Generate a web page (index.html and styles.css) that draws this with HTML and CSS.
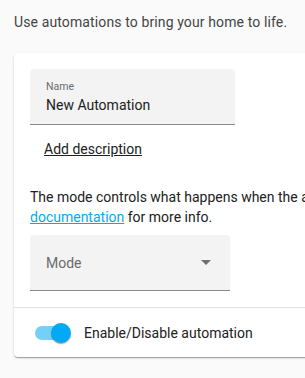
FILE: index.html
```html
<!DOCTYPE html>
<html lang="en">
  <head>
    <meta charset="UTF-8" />
    <meta name="viewport" content="width=device-width, initial-scale=1.0" />
    <title>Automation Editor</title>
    <link rel="stylesheet" href="styles.css">
  </head>
  <body>
    <p class="intro">Use automations to bring your home to life.</p>

    <div class="card">
      <div class="card-content">
        <div class="textfield">
          <span class="field-label">Name</span>
          <span class="field-value">New Automation</span>
        </div>

        <button class="text-btn">Add description</button>

        <p class="mode-info">
          The mode controls what happens when the automation is triggered while the actions are still running. Check the<br>
          <a href="#">documentation</a> for more info.
        </p>

        <div class="select">
          <span class="select-label">Mode</span>
          <svg class="select-arrow" viewBox="0 0 10 5">
            <path d="M0 0h10L5 5z" />
          </svg>
        </div>
      </div>

      <div class="card-actions">
        <div class="switch">
          <div class="switch-track"></div>
          <div class="switch-thumb"></div>
        </div>
        <span class="switch-text">Enable/Disable automation</span>
      </div>
    </div>
  </body>
</html>
```

FILE: styles.css
```css
* {
  margin: 0;
  padding: 0;
  box-sizing: border-box;
}

body {
  font-family: Roboto, "Noto Sans", sans-serif;
  background-color: #fafafa;
  color: #212121;
  width: 305px;
  height: 378px;
  overflow: hidden;
}

.intro {
  font-size: 14px;
  line-height: 20px;
  letter-spacing: 0.12px;
  white-space: nowrap;
  color: #444;
  padding: 12px 14px 0;
}

.card {
  margin: 21px 0 0 14px;
  width: 330px;
  background-color: #fff;
  border-radius: 4px;
  box-shadow: 0 2px 1px -1px rgba(0, 0, 0, 0.2), 0 1px 1px 0 rgba(0, 0, 0, 0.14),
    0 1px 3px 0 rgba(0, 0, 0, 0.12);
}

.card-content {
  padding: 16px 16px 16px;
  display: flex;
  flex-direction: column;
  align-items: flex-start;
}

.textfield {
  width: 205px;
  height: 56px;
  background-color: #f3f3f3;
  border-radius: 4px 4px 0 0;
  border-bottom: 1px solid #8a8a8a;
  padding: 11px 16px 0;
  display: flex;
  flex-direction: column;
}

.field-label {
  font-size: 10.5px;
  line-height: 14px;
  color: #6b6b6b;
}

.field-value {
  font-size: 14px;
  line-height: 18px;
  margin-top: 2px;
  color: #212121;
}

.text-btn {
  margin: 6px 0 0 8px;
  height: 36px;
  padding: 0 6px;
  border: none;
  background: none;
  font-family: inherit;
  font-size: 14px;
  color: #212121;
  text-decoration: underline;
  cursor: pointer;
}

.mode-info {
  margin-top: 20px;
  font-size: 14px;
  line-height: 20px;
  color: #212121;
  white-space: nowrap;
  width: 275px;
  overflow: hidden;
}

.mode-info a {
  color: #03a9f4;
}

.select {
  margin-top: 8px;
  width: 200px;
  height: 56px;
  background-color: #f3f3f3;
  border-radius: 4px 4px 0 0;
  border-bottom: 1px solid #8a8a8a;
  padding: 0 19px 0 16px;
  display: flex;
  align-items: center;
  justify-content: space-between;
}

.select-label {
  font-size: 14px;
  color: #6b6b6b;
}

.select-arrow {
  width: 10px;
  height: 5px;
  fill: #707070;
}

.card-actions {
  border-top: 1px solid #e0e0e0;
  height: 50px;
  padding: 0 21px;
  display: flex;
  align-items: center;
  gap: 13px;
}

.switch {
  position: relative;
  width: 36px;
  height: 20px;
  display: flex;
  align-items: center;
}

.switch-track {
  width: 34px;
  height: 14px;
  border-radius: 7px;
  background-color: rgba(3, 169, 244, 0.55);
}

.switch-thumb {
  position: absolute;
  right: 0;
  top: 0;
  width: 20px;
  height: 20px;
  border-radius: 50%;
  background-color: #03a9f4;
  box-shadow: 0 2px 1px -1px rgba(0, 0, 0, 0.2), 0 1px 1px 0 rgba(0, 0, 0, 0.14),
    0 1px 3px 0 rgba(0, 0, 0, 0.12);
}

.switch-text {
  font-size: 14px;
  color: #212121;
}
```
